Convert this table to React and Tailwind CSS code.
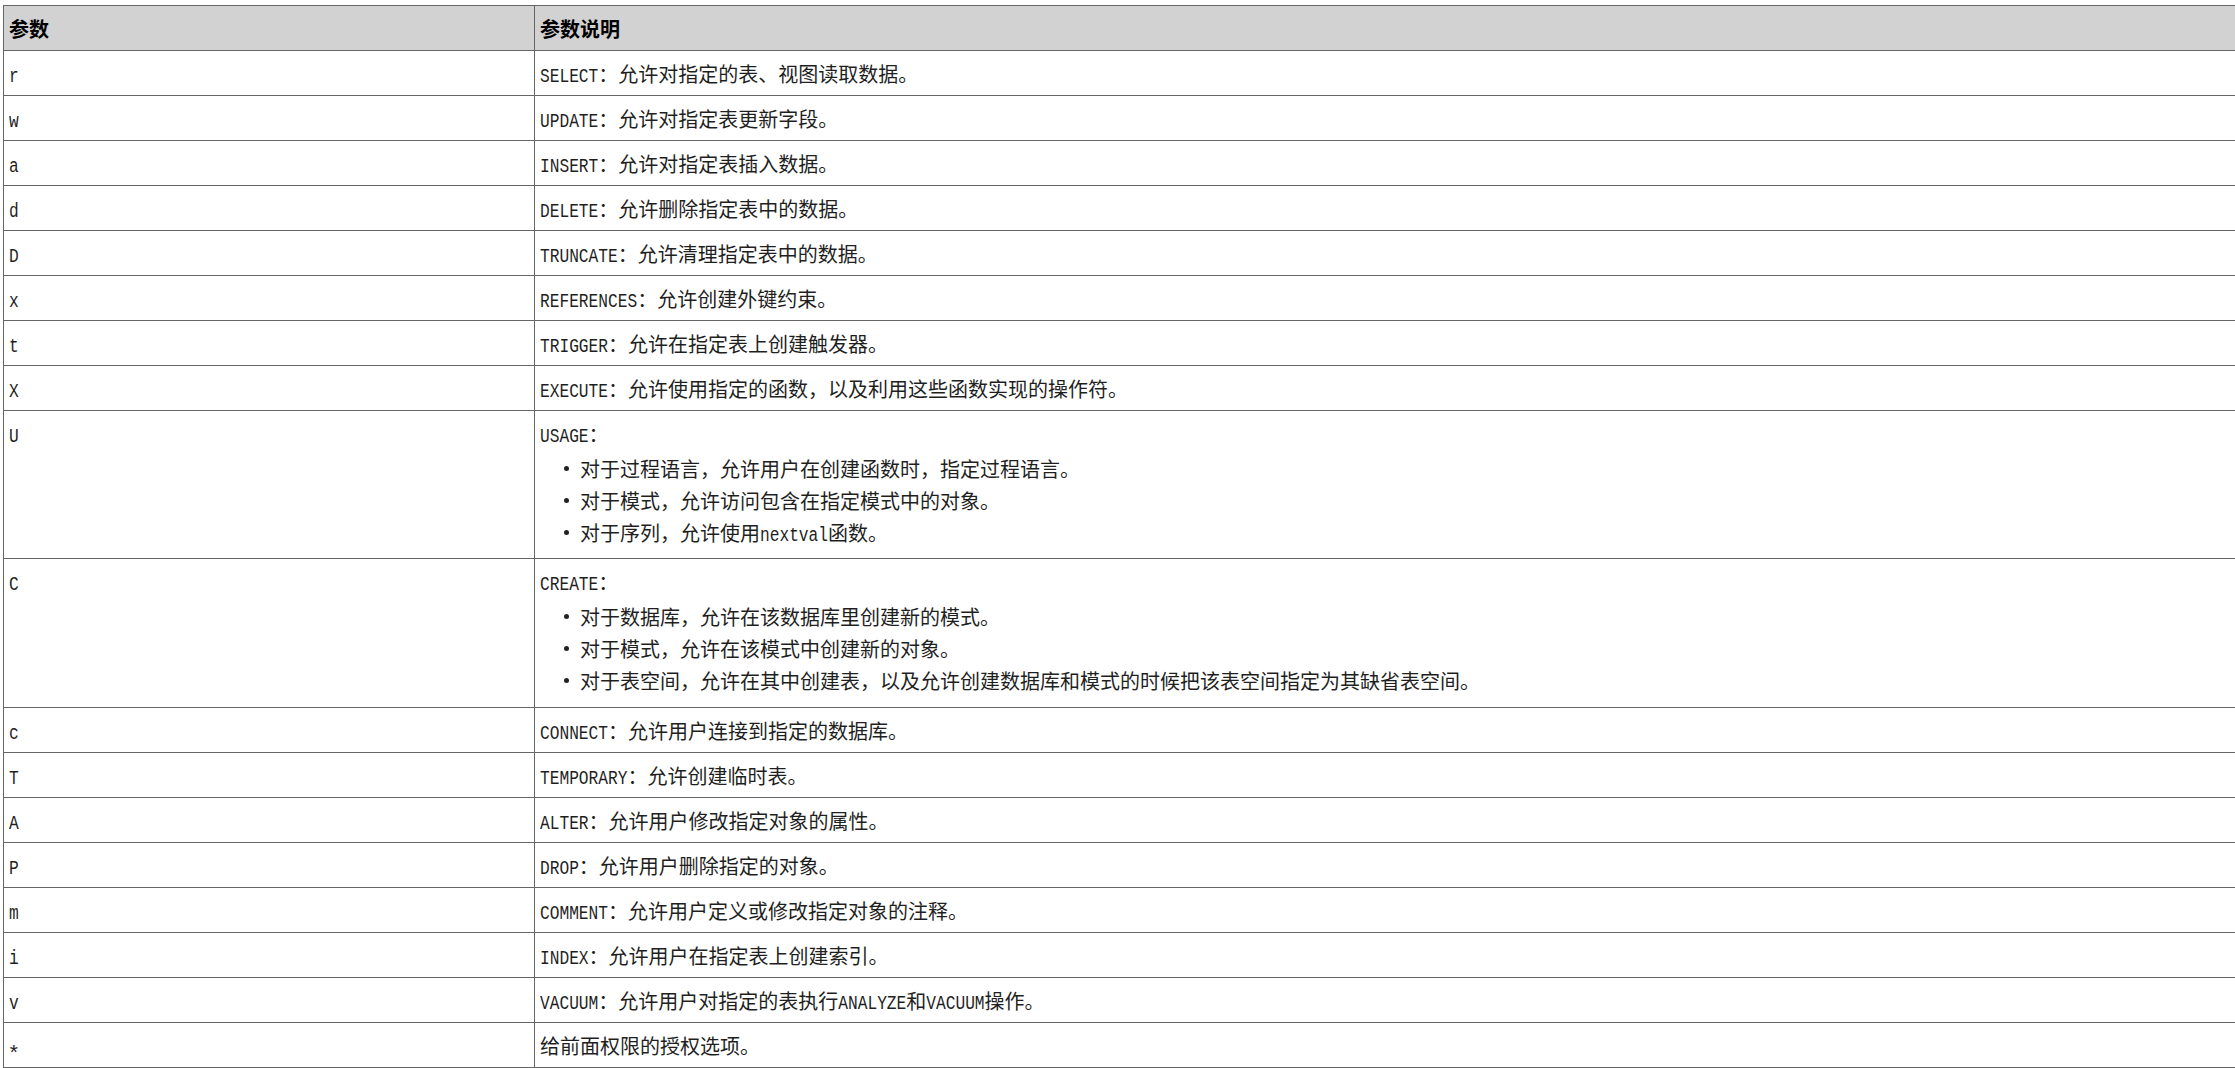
import React from "react";

const rows = [
  ["r", "SELECT：允许对指定的表、视图读取数据。"],
  ["w", "UPDATE：允许对指定表更新字段。"],
  ["a", "INSERT：允许对指定表插入数据。"],
  ["d", "DELETE：允许删除指定表中的数据。"],
  ["D", "TRUNCATE：允许清理指定表中的数据。"],
  ["x", "REFERENCES：允许创建外键约束。"],
  ["t", "TRIGGER：允许在指定表上创建触发器。"],
  ["X", "EXECUTE：允许使用指定的函数，以及利用这些函数实现的操作符。"],
  [
    "U",
    "USAGE：",
    [
      "对于过程语言，允许用户在创建函数时，指定过程语言。",
      "对于模式，允许访问包含在指定模式中的对象。",
      "对于序列，允许使用nextval函数。",
    ],
  ],
  [
    "C",
    "CREATE：",
    [
      "对于数据库，允许在该数据库里创建新的模式。",
      "对于模式，允许在该模式中创建新的对象。",
      "对于表空间，允许在其中创建表，以及允许创建数据库和模式的时候把该表空间指定为其缺省表空间。",
    ],
  ],
  ["c", "CONNECT：允许用户连接到指定的数据库。"],
  ["T", "TEMPORARY：允许创建临时表。"],
  ["A", "ALTER：允许用户修改指定对象的属性。"],
  ["P", "DROP：允许用户删除指定的对象。"],
  ["m", "COMMENT：允许用户定义或修改指定对象的注释。"],
  ["i", "INDEX：允许用户在指定表上创建索引。"],
  ["v", "VACUUM：允许用户对指定的表执行ANALYZE和VACUUM操作。"],
  ["*", "给前面权限的授权选项。"],
];

// latin runs get the narrow mono face (stretched up a bit), the rest stays CJK
const Txt = ({ s }) =>
  s.split(/([A-Za-z*]+)/).map((part, i) =>
    /^[A-Za-z*]+$/.test(part) ? (
      <span
        key={i}
        className={
          part === "*"
            ? "inline-block translate-y-[5px] scale-[1.3] font-['Liberation_Mono',monospace] text-[16.2px] leading-none"
            : "inline-block origin-[50%_80%] scale-y-[1.3] font-['Liberation_Mono',monospace] text-[16.2px] leading-none"
        }
      >
        {part}
      </span>
    ) : (
      <span key={i}>{part}</span>
    )
  );

const cell =
  "border border-[#666] align-top pl-[5px] pr-[5px] pt-[9px] pb-[8px] leading-[27px] text-left";

export default function App() {
  return (
    <div className="h-screen w-screen overflow-hidden bg-white pt-[5px] pl-[3px] font-['Noto_Sans_CJK_SC',sans-serif] text-[20px] text-[#1f1f1f]">
      <table className="w-[2250px] border-collapse">
        <thead>
          <tr className="bg-[#d2d2d2]">
            <th className={cell + " w-[531px] font-bold text-black"}>参数</th>
            <th className={cell + " font-bold text-black"}>参数说明</th>
          </tr>
        </thead>
        <tbody>
          {rows.map(([key, desc, items]) => (
            <tr key={key}>
              <td className={cell}>
                <div className="h-[27px]">
                  <Txt s={key} />
                </div>
              </td>
              <td className={cell}>
                <div className="h-[27px]">
                  <Txt s={desc} />
                </div>
                {items && (
                  <ul className={key === "C" ? "mt-[5px] mb-[3px]" : "mt-[5px] mb-[2px]"}>
                    {items.map((it) => (
                      <li key={it} className="flex h-[32px] items-center">
                        <span className="flex w-[40px] justify-end pr-[11px]">
                          <span className="h-[5px] w-[5px] rounded-full bg-[#222]" />
                        </span>
                        <span className="leading-[27px]">
                          <Txt s={it} />
                        </span>
                      </li>
                    ))}
                  </ul>
                )}
              </td>
            </tr>
          ))}
        </tbody>
      </table>
    </div>
  );
}
